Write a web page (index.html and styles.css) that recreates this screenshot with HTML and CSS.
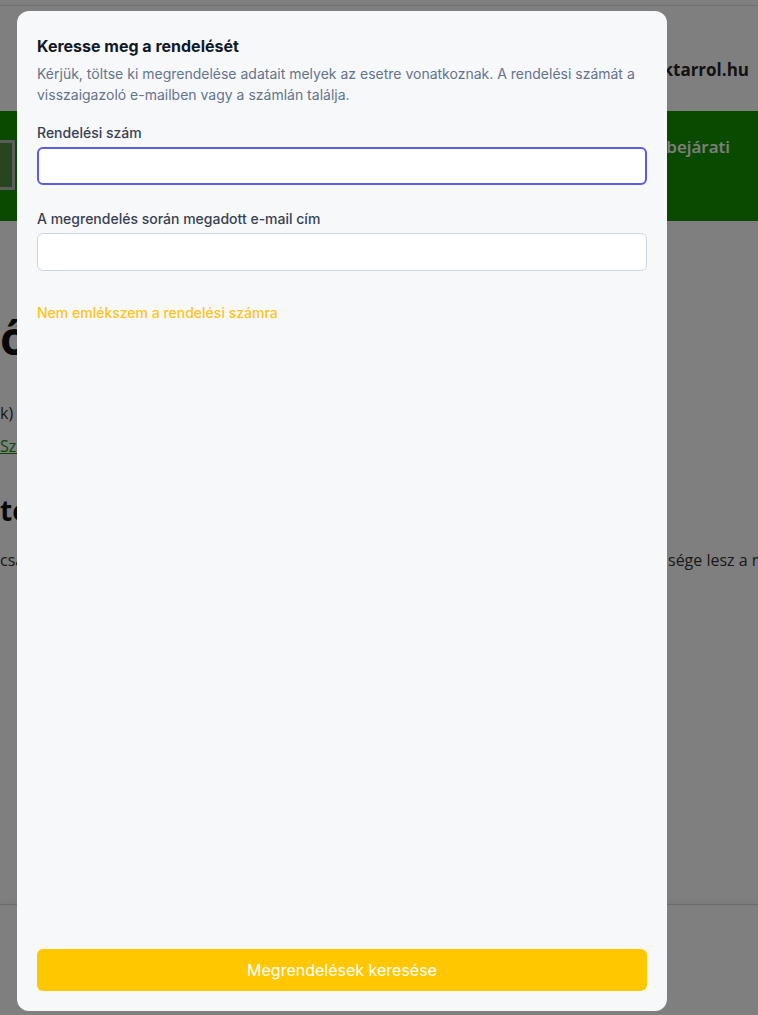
FILE: index.html
```html
<!DOCTYPE html>
<html lang="hu">
<head>
  <meta charset="UTF-8" />
  <meta name="viewport" content="width=device-width, initial-scale=1.0"/>
  <title>Rendelés keresése</title>
  <link rel="stylesheet" href="styles.css">
</head>
<body>
  <div class="site">
    <div class="topbar"></div>
    <header class="header">
      <span class="logo">raktarrol.hu</span>
    </header>

    <section class="banner">
      <div class="banner-img"></div>
      <div class="banner-text">
        <p class="banner-line">Az átvétel a raktár hátsó bejárati</p>
        <p class="banner-line banner-line-short">kapujánál történik.</p>
      </div>
    </section>

    <main class="content">
      <h1 class="page-title">őbb</h1>
      <p class="text">k) alatt kerül feldolgozásra.</p>
      <a class="text link" href="#">Szállítási feltételek</a>
      <h2 class="section-title">teendők</h2>
      <div class="split">
        <span class="text">csak a visszaigazolás után</span>
        <span class="text">sége lesz a megrendelést módosítani</span>
      </div>
    </main>

    <div class="sticky-bar"></div>
  </div>

  <div class="backdrop"></div>

  <div class="modal" role="dialog" aria-labelledby="lookupTitle">
    <h2 class="modal-title" id="lookupTitle">Keresse meg a rendelését</h2>
    <p class="modal-desc">Kérjük, töltse ki megrendelése adatait melyek az esetre vonatkoznak. A rendelési számát a visszaigazoló e-mailben vagy a számlán találja.</p>

    <form class="lookup" id="lookupForm">
      <label class="field">
        <span class="field-label">Rendelési szám</span>
        <input class="field-input is-focused" type="text" id="orderNo" />
      </label>
      <label class="field">
        <span class="field-label">A megrendelés során megadott e-mail cím</span>
        <input class="field-input" type="email" id="email" />
      </label>
      <a class="forgot" href="#">Nem emlékszem a rendelési számra</a>
      <button class="submit" type="submit">Megrendelések keresése</button>
    </form>
  </div>
</body>
</html>
```

FILE: styles.css
```css
* { box-sizing: border-box; }
body { margin: 0; background: #fff; font-family: "Open Sans", "Liberation Sans", sans-serif; color: #222; overflow: hidden; }

/* page behind the dialog */
.site { width: 758px; height: 1015px; overflow: hidden; }
.topbar { height: 6px; border-bottom: 1px solid #e4e4e4; }
.header {
  height: 105px;
  display: flex;
  justify-content: flex-end;
  align-items: flex-start;
  padding: 52px 9px 0 0;
}
.logo { font-size: 17px; font-weight: 700; line-height: 24px; color: #262626; }

.banner { height: 110px; background: #149400; display: flex; }
.banner-img {
  width: 15px;
  height: 50px;
  margin-top: 29px;
  background: #4f8c3e;
  border: 3px solid #b9b9b9;
  border-left: none;
  flex-shrink: 0;
}
.banner-text { flex: 1; padding: 23px 28px 0 20px; }
.banner-line { margin: 0; font-size: 17px; font-weight: 600; line-height: 26px; color: #fff; text-align: right; }
.banner-line-short { text-align: left; }

.content { display: flex; flex-direction: column; align-items: flex-start; }
.page-title { margin: 88px 0 0; font-size: 46px; line-height: 56px; font-weight: 700; color: #111; }
.text { margin: 36px 0 0; font-size: 16px; line-height: 24px; color: #333; white-space: nowrap; }
.link { margin-top: 9px; color: #149400; text-decoration: underline; }
.section-title { margin: 34px 0 0; font-size: 28px; line-height: 36px; font-weight: 700; color: #111; }
.split { margin-top: 20px; width: 100%; display: grid; grid-template-columns: 668px 1fr; overflow: hidden; }
.split .text { margin: 0; overflow: hidden; }

.sticky-bar {
  position: fixed;
  left: 0;
  right: 0;
  bottom: 0;
  height: 111px;
  background: #fff;
  border-top: 1px solid #d6d6d6;
  box-shadow: 0 -2px 6px rgba(0, 0, 0, 0.06);
}

.backdrop { position: fixed; inset: 0; background: rgba(0, 0, 0, 0.5); }

/* order lookup dialog */
.modal {
  position: fixed;
  top: 11px;
  left: 17px;
  width: 650px;
  height: 1000px;
  padding: 23px 20px 20px;
  background: #f7f8fa;
  border-radius: 12px;
  display: flex;
  flex-direction: column;
  font-family: Inter, "Liberation Sans", sans-serif;
}
.modal-title { margin: 0; font-size: 16px; line-height: 24px; font-weight: 700; color: #111827; }
.modal-desc { margin: 5px 0 0; font-size: 14px; line-height: 21px; color: #64748b; }

.lookup { flex: 1; margin-top: 18px; display: flex; flex-direction: column; align-items: stretch; }
.field { display: flex; flex-direction: column; gap: 4px; margin-bottom: 24px; }
.field + .field { margin-bottom: 0; }
.field-label { font-size: 14px; line-height: 20px; font-weight: 500; color: #374151; }
.field-input {
  height: 38px;
  padding: 0 12px;
  font: inherit;
  font-size: 14px;
  background: #fff;
  border: 1px solid #cbd5e1;
  border-radius: 6px;
  outline: none;
}
.field-input.is-focused { border: 2px solid #5b5de8; }

.forgot {
  align-self: flex-start;
  margin-top: 32px;
  font-size: 14px;
  line-height: 20px;
  font-weight: 500;
  color: #fcc419;
  text-decoration: none;
}

.submit {
  margin-top: auto;
  height: 42px;
  border: none;
  border-radius: 6px;
  background: #ffc700;
  color: #fff;
  font: inherit;
  font-size: 16px;
  font-weight: 400;
  cursor: pointer;
}
```
